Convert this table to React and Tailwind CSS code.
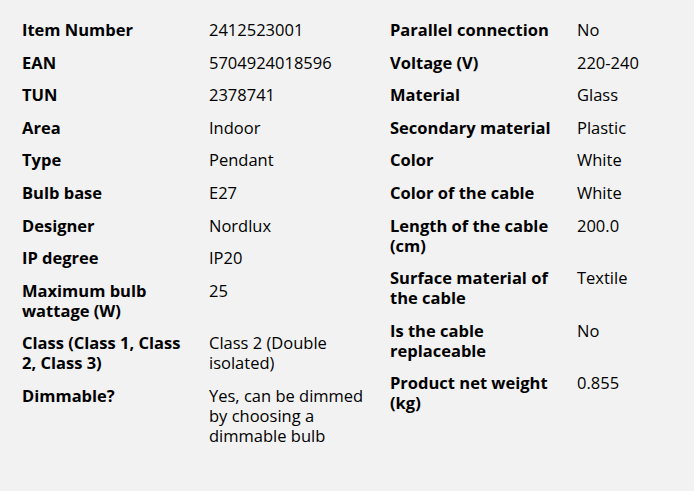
const left = [
  ["Item Number", "2412523001"],
  ["EAN", "5704924018596"],
  ["TUN", "2378741"],
  ["Area", "Indoor"],
  ["Type", "Pendant"],
  ["Bulb base", "E27"],
  ["Designer", "Nordlux"],
  ["IP degree", "IP20"],
  ["Maximum bulb wattage (W)", "25"],
  ["Class (Class 1, Class 2, Class 3)", "Class 2 (Double isolated)"],
  ["Dimmable?", "Yes, can be dimmed by choosing a dimmable bulb"],
];

const right = [
  ["Parallel connection", "No"],
  ["Voltage (V)", "220-240"],
  ["Material", "Glass"],
  ["Secondary material", "Plastic"],
  ["Color", "White"],
  ["Color of the cable", "White"],
  ["Length of the cable (cm)", "200.0"],
  ["Surface material of the cable", "Textile"],
  ["Is the cable replaceable", "No"],
  ["Product net weight (kg)", "0.855"],
];

const SpecTable = ({ rows, className }) => (
  <div className={`grid grid-cols-[187px_1fr] gap-y-[12.6px] content-start ${className}`}>
    {rows.map(([label, value]) => (
      <div key={label} className="contents">
        <div className="pr-5 font-bold">{label}</div>
        <div className="pr-5">{value}</div>
      </div>
    ))}
  </div>
);

export default function App() {
  return (
    <div
      className="w-[694px] h-[491px] overflow-hidden bg-[#f2f2f2] text-black text-[16.5px] leading-[20px] flex pl-[22px] pt-5"
      style={{ fontFamily: '"Open Sans", "Noto Sans", sans-serif' }}
    >
      <SpecTable rows={left} className="w-[368px] shrink-0" />
      <SpecTable rows={right} className="flex-1" />
    </div>
  );
}
